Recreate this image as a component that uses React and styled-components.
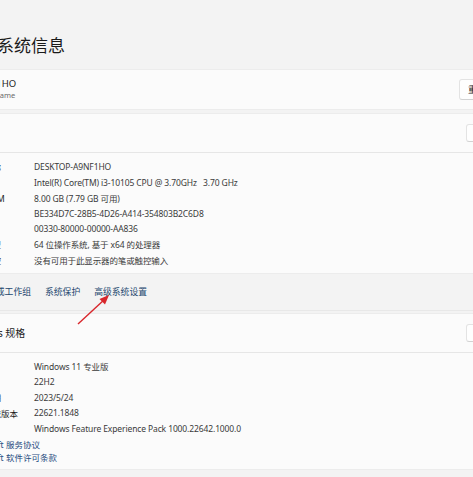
import React from 'react';
import styled, { createGlobalStyle } from 'styled-components';

const GlobalStyle = createGlobalStyle`
  html, body {
    margin: 0;
    padding: 0;
    background: #f3f3f3;
    overflow: hidden;
  }
  body {
    font-family: "Noto Sans", "Noto Sans CJK SC", sans-serif;
    color: #1b1b1b;
  }
`;

const specs = [
  { label: '设备名称', value: 'DESKTOP-A9NF1HO' },
  { label: '处理器', value: 'Intel(R) Core(TM) i3-10105 CPU @ 3.70GHz   3.70 GHz' },
  { label: '机带 RAM', value: '8.00 GB (7.79 GB 可用)' },
  { label: '设备 ID', value: 'BE334D7C-28B5-4D26-A414-354803B2C6D8' },
  { label: '产品 ID', value: '00330-80000-00000-AA836' },
  { label: '系统类型', value: '64 位操作系统, 基于 x64 的处理器' },
  { label: '笔和触控', value: '没有可用于此显示器的笔或触控输入' },
];

const winSpecs = [
  { label: '版本', value: 'Windows 11 专业版' },
  { label: '版本', value: '22H2' },
  { label: '安装日期', value: '2023/5/24' },
  { label: '操作系统版本', value: '22621.1848' },
  { label: '体验', value: 'Windows Feature Experience Pack 1000.22642.1000.0' },
];

const App = () => (
  <>
    <GlobalStyle />
    <Page>
      <Title>系统信息</Title>

      <Card>
        <NameBlock>
          <DeviceName>DESKTOP-A9NF1HO</DeviceName>
          <Caption>Name</Caption>
        </NameBlock>
        <SideButton>重命名这台电脑</SideButton>
      </Card>

      <Expander>
        <ExpanderHead>
          <HeadTitle>设备规格</HeadTitle>
          <SideButton $small>复制</SideButton>
        </ExpanderHead>
        <ExpanderBody>
          {specs.map((s, i) => (
            <SpecRow key={i}>
              <Label>{s.label}</Label>
              <Value>{s.value}</Value>
            </SpecRow>
          ))}
        </ExpanderBody>
      </Expander>

      <Related>
        <RelLink>域或工作组</RelLink>
        <RelLink>系统保护</RelLink>
        <RelLink>高级系统设置</RelLink>
        <Arrow width="40" height="36" viewBox="0 0 40 36">
          <line x1="4" y1="32" x2="31" y2="7" stroke="#d8262b" strokeWidth="1.4" />
          <path d="M35 3 L25.5 7 L31 12.5 Z" fill="#d8262b" />
        </Arrow>
      </Related>

      <Expander $last>
        <ExpanderHead>
          <HeadTitle>Windows 规格</HeadTitle>
          <SideButton $small>复制</SideButton>
        </ExpanderHead>
        <ExpanderBody $tight>
          {winSpecs.map((s, i) => (
            <SpecRow key={i}>
              <Label>{s.label}</Label>
              <Value>{s.value}</Value>
            </SpecRow>
          ))}
          <FootLinks>
            <FootLink>Microsoft 服务协议</FootLink>
            <FootLink>Microsoft 软件许可条款</FootLink>
          </FootLinks>
        </ExpanderBody>
      </Expander>
    </Page>
  </>
);

const Page = styled.div`
  position: relative;
  width: 600px;
  margin-left: -44px;
  padding-top: 35px;
  display: flex;
  flex-direction: column;
`;

const Title = styled.h1`
  margin: 0 0 12px 41px;
  font-size: 17px;
  font-weight: 400;
  line-height: 22px;
  color: #1a1a1a;
`;

const Card = styled.div`
  height: 41px;
  box-sizing: border-box;
  background: #fbfbfb;
  border: 1px solid #ececec;
  border-radius: 3px;
  display: flex;
  align-items: center;
  justify-content: space-between;
  padding: 0 0 0 12px;
`;

const NameBlock = styled.div`
  display: flex;
  flex-direction: column;
`;

const DeviceName = styled.div`
  font-size: 9.5px;
  line-height: 12px;
  margin-left: -41px;
`;

const Caption = styled.div`
  font-size: 7.5px;
  line-height: 11px;
  color: #6b6b6b;
  margin-left: 25px;
`;

const SideButton = styled.div`
  width: ${p => (p.$small ? '60px' : '96px')};
  height: ${p => (p.$small ? '18px' : '21px')};
  margin-right: ${p => (p.$small ? '29px' : '0')};
  box-sizing: border-box;
  background: #fefefe;
  border: 1px solid #e3e3e3;
  border-bottom-color: #d2d2d2;
  border-radius: 3px;
  font-size: 9px;
  line-height: 19px;
  padding-left: 8px;
  color: #1b1b1b;
  white-space: nowrap;
  overflow: hidden;
`;

const Expander = styled.div`
  margin-top: ${p => (p.$last ? '0' : '3px')};
  background: #fbfbfb;
  border: 1px solid #ececec;
  border-radius: 3px;
  display: flex;
  flex-direction: column;
`;

const ExpanderHead = styled.div`
  height: 39px;
  box-sizing: border-box;
  border-bottom: 1px solid #e6e6e6;
  display: flex;
  align-items: center;
  justify-content: space-between;
  padding: 0 0 0 3px;
`;

const HeadTitle = styled.div`
  font-size: 10px;
  line-height: 14px;
  color: #1b1b1b;
`;

const ExpanderBody = styled.div`
  padding: ${p => (p.$tight ? '6px 0 5px' : '6px 0 5px')};
  display: flex;
  flex-direction: column;
`;

const SpecRow = styled.div`
  height: 15.5px;
  display: grid;
  grid-template-columns: 67px 1fr;
  align-items: center;
  padding-left: 10px;
  font-size: 8.5px;
  white-space: pre;
`;

const Label = styled.span`
  color: #1b1b1b;
`;

const Value = styled.span`
  color: #3a3a3a;
  letter-spacing: -0.12px;
`;

const FootLinks = styled.div`
  padding: 2px 0 0 9px;
  display: flex;
  flex-direction: column;
`;

const FootLink = styled.div`
  height: 13px;
  line-height: 13px;
  font-size: 8.5px;
  color: #1f4b80;
`;

const Related = styled.div`
  position: relative;
  height: 37px;
  box-sizing: border-box;
  display: flex;
  align-items: center;
  gap: 14px;
  padding: 0 0 1px 31px;
  border-bottom: 1px solid #e8e8e8;
  margin-bottom: 2px;
`;

const RelLink = styled.span`
  font-size: 8.8px;
  color: #24476e;
`;

const Arrow = styled.svg`
  position: absolute;
  left: 118px;
  top: 18px;
`;

export default App;
